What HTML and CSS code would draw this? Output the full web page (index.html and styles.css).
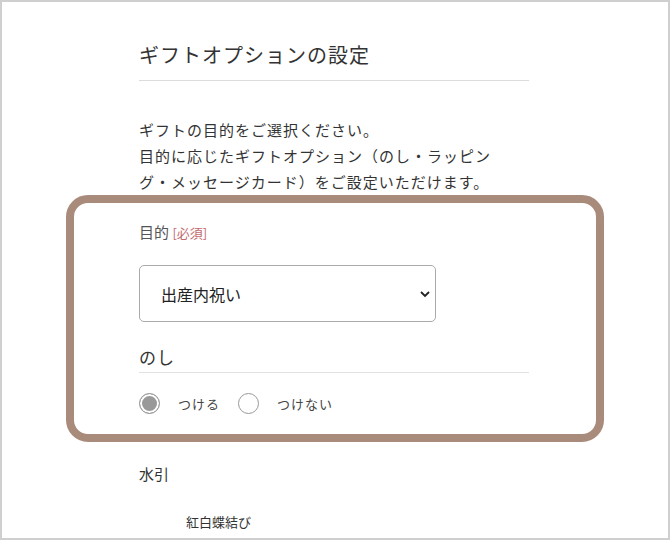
FILE: index.html
```html
<!DOCTYPE html>
<html lang="ja">
<head>
  <meta charset="UTF-8" />
  <title>ギフトオプションの設定</title>
  <link rel="stylesheet" href="styles.css">
</head>
<body>
  <div class="wrap">
    <div class="section">
      <h1 class="title">ギフトオプションの設定</h1>
      <p class="lead">ギフトの目的をご選択ください。<br>目的に応じたギフトオプション（のし・ラッピン<br>グ・メッセージカード）をご設定いただけます。</p>
    </div>

    <!-- 目的 + のし -->
    <div class="highlight">
      <div class="field-label">目的 <span class="required">[必須]</span></div>
      <div class="select">
        <span>出産内祝い</span>
        <svg width="12" height="8" viewBox="0 0 12 8"><path d="M2 2l4 4 4-4" fill="none" stroke="#222" stroke-width="1.8"/></svg>
      </div>
      <h2 class="sub-title">のし</h2>
      <div class="radios">
        <span class="radio checked"></span><span class="radio-text">つける</span>
        <span class="radio"></span><span class="radio-text">つけない</span>
      </div>
    </div>

    <div class="section">
      <div class="mizuhiki">水引</div>
      <div class="mizuhiki-item">紅白蝶結び</div>
    </div>
  </div>
</body>
</html>
```

FILE: styles.css
```css
* {
  margin: 0;
  padding: 0;
  box-sizing: border-box;
}

html, body {
  width: 670px;
  height: 540px;
  overflow: hidden;
}

body {
  border: 2px solid #cfcfcf;
  background: #fff;
  font-family: "Noto Sans CJK JP", "Noto Sans", sans-serif;
  color: #333;
}

.wrap {
  width: 538px;
  margin: 0 auto;
}

.section {
  padding: 0 75px 0 73px;
}

.title {
  margin-top: 38px;
  padding-bottom: 10px;
  font-size: 20px;
  font-weight: 400;
  line-height: 30px;
  letter-spacing: 1px;
  color: #333;
  border-bottom: 1px solid #dcdcdc;
}

.lead {
  margin-top: 36px;
  font-size: 15px;
  line-height: 26px;
  letter-spacing: 1px;
  color: #333;
}

.highlight {
  border: 8px solid #a98b7b;
  border-radius: 22px;
  padding: 19px 67px 20px 65px;
}

.field-label {
  font-size: 15px;
  line-height: 20px;
  color: #555;
}

.required {
  font-size: 13px;
  color: #c26a6c;
}

.select {
  margin-top: 22px;
  width: 297px;
  height: 57px;
  padding: 0 4px 0 21px;
  border: 1px solid #aaa;
  border-radius: 5px;
  display: flex;
  align-items: center;
  justify-content: space-between;
  font-size: 16px;
  color: #222;
}

.sub-title {
  margin-top: 23px;
  padding-bottom: 3px;
  font-size: 17px;
  font-weight: 400;
  line-height: 24px;
  letter-spacing: 1px;
  color: #333;
  border-bottom: 1px solid #e2e2e2;
}

.radios {
  margin-top: 19px;
  height: 22px;
  display: flex;
  align-items: center;
}

.radio {
  width: 21px;
  height: 21px;
  border: 1px solid #999;
  border-radius: 50%;
  background: #fff;
}

.radio.checked {
  background: #999;
  box-shadow: inset 0 0 0 2px #fff;
}

.radio-text {
  margin: 0 18px 0 18px;
  font-size: 13px;
  letter-spacing: 1px;
  color: #444;
}

.mizuhiki {
  margin-top: 21px;
  font-size: 15px;
  line-height: 22px;
  color: #333;
}

.mizuhiki-item {
  margin-top: 27px;
  padding-left: 47px;
  font-size: 13px;
  line-height: 20px;
  color: #333;
}
```
